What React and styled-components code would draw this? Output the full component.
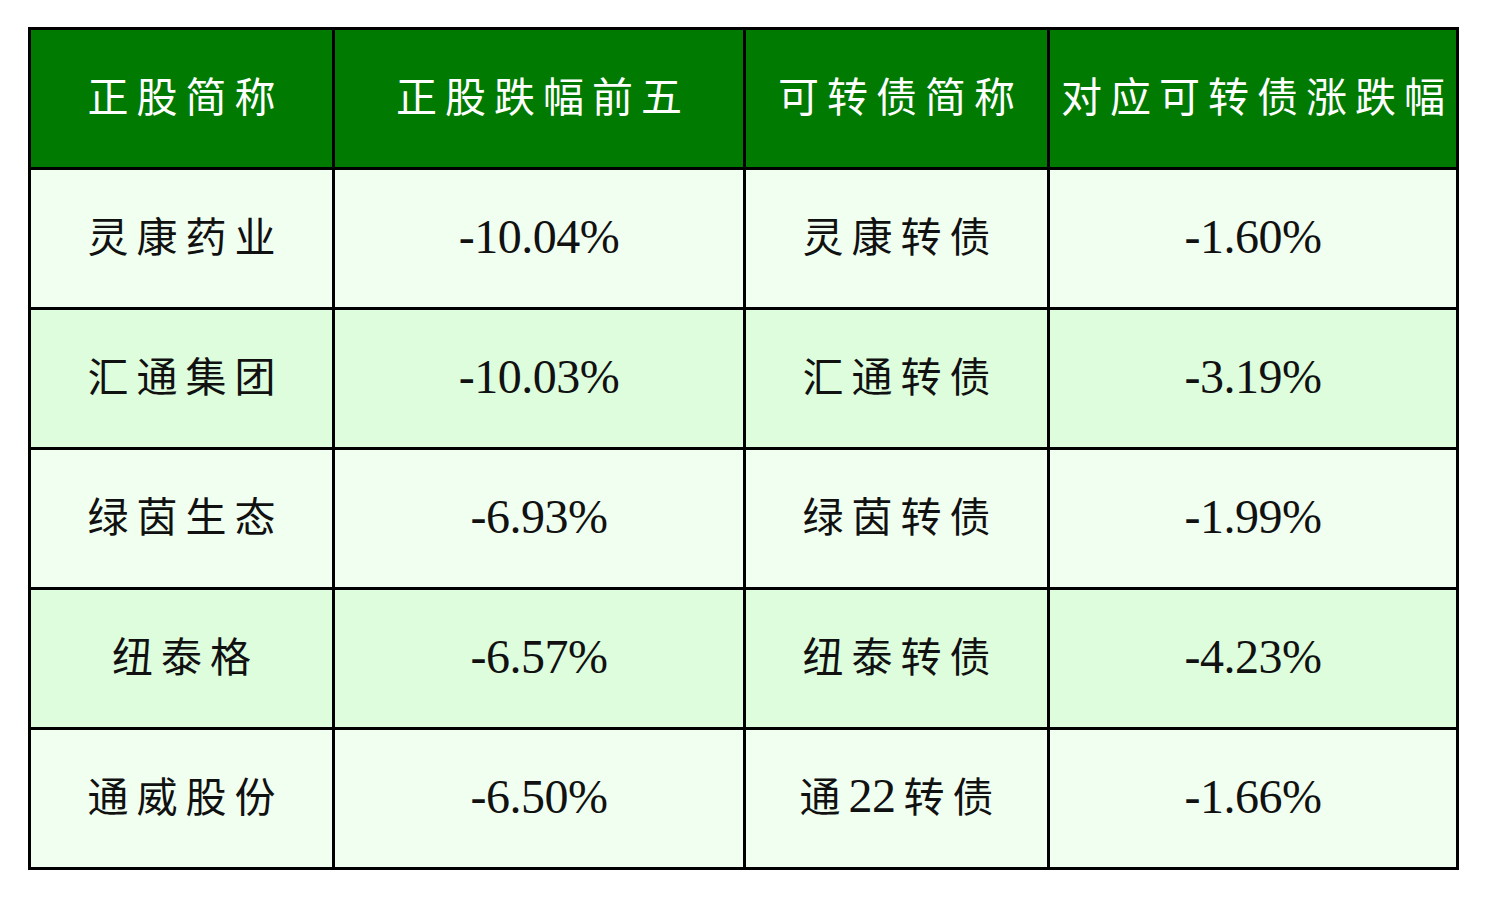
import React from "react";
import styled, { createGlobalStyle } from "styled-components";

const rows = [
  ["灵康药业", "-10.04%", "灵康转债", "-1.60%"],
  ["汇通集团", "-10.03%", "汇通转债", "-3.19%"],
  ["绿茵生态", "-6.93%", "绿茵转债", "-1.99%"],
  ["纽泰格", "-6.57%", "纽泰转债", "-4.23%"],
  ["通威股份", "-6.50%", "通22转债", "-1.66%"],
];

const heads = ["正股简称", "正股跌幅前五", "可转债简称", "对应可转债涨跌幅"];

const GlobalStyle = createGlobalStyle`
  html, body {
    margin: 0;
    padding: 0;
    background: #ffffff;
  }
`;

const Page = styled.div`
  padding: 27px 0 0 28px;
`;

// 表格外框 + 网格线 (用 gap 露出黑色背景)
const Grid = styled.div`
  display: grid;
  grid-template-columns: 301px 408px 301px 406px;
  grid-auto-rows: 137px;
  gap: 3px;
  padding: 3px;
  width: fit-content;
  background: #000;
`;

const HeadCell = styled.div`
  display: flex;
  align-items: center;
  justify-content: center;
  background: #007a00;
  color: #fff;
  font-family: "Noto Sans CJK SC", sans-serif;
  font-size: 41px;
  font-weight: 400;
  letter-spacing: 8px;
  white-space: nowrap;
  padding: 0 0 9px 8px;
`;

const Cell = styled.div`
  display: flex;
  align-items: center;
  justify-content: center;
  background: ${(p) => (p.$alt ? "#ddfddd" : "#f0fff0")};
  color: #111;
  white-space: nowrap;
`;

const NameText = styled.span`
  font-family: "Noto Sans CJK SC", sans-serif;
  font-size: 41px;
  letter-spacing: 8px;
  padding: 0 0 9px 8px;
`;

const NumText = styled.span`
  font-family: "Liberation Serif", serif;
  font-size: 48px;
  letter-spacing: -0.5px;
  padding-bottom: 4px;
`;

// 中文单元格里的数字 (如 "通22转债") 用衬线体, 不加字距
const Latin = styled.span`
  font-family: "Liberation Serif", serif;
  font-size: 48px;
  letter-spacing: -0.5px;
  margin-right: 8px;
`;

function renderName(text) {
  return text.split(/(\d+)/).map((part, k) =>
    /^\d+$/.test(part) ? <Latin key={k}>{part}</Latin> : part
  );
}

export default function App() {
  return (
    <Page>
      <GlobalStyle />
      <Grid>
        {heads.map((h) => (
          <HeadCell key={h}>{h}</HeadCell>
        ))}
        {rows.map((r, i) =>
          r.map((v, j) => (
            <Cell key={i + "-" + j} $alt={i % 2 === 1}>
              {j % 2 === 1 ? (
                <NumText>{v}</NumText>
              ) : (
                <NameText>{renderName(v)}</NameText>
              )}
            </Cell>
          ))
        )}
      </Grid>
    </Page>
  );
}
